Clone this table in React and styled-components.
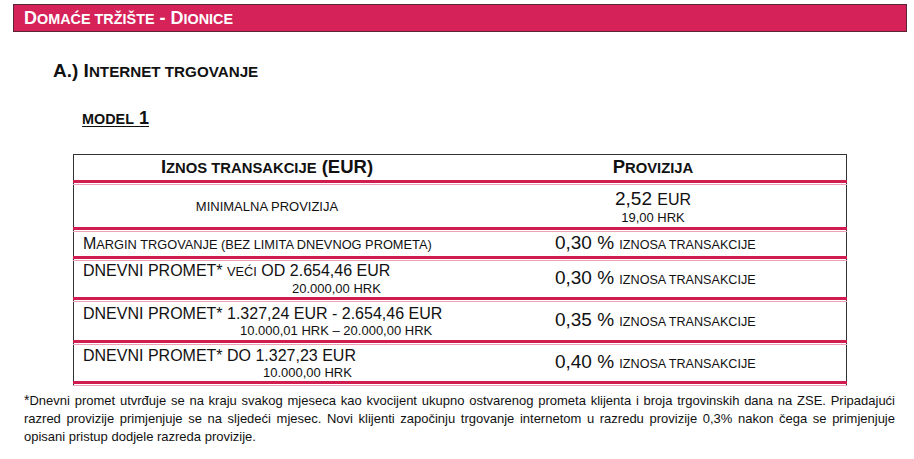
import styled, { createGlobalStyle } from "styled-components";

const GlobalStyle = createGlobalStyle`
  body {
    margin: 0;
    background: #fff;
    font-family: "Liberation Sans", Arial, sans-serif;
    color: #111;
  }
`;

const Page = styled.div`
  width: 914px;
  height: 459px;
  padding-top: 4px;
  box-sizing: border-box;
`;

// hand-made small caps: the reference uses a larger ratio than the browser's 0.7
const SC = styled.span`
  font-size: 0.8em;
  text-transform: uppercase;
`;

const Banner = styled.div`
  margin-left: 13px;
  width: 894px;
  height: 28px;
  box-sizing: border-box;
  background: #d5235a;
  border: 1px solid #5a2436;
  display: flex;
  align-items: center;
  padding-left: 10px;
  color: #fff;
  font-weight: 700;
  font-size: 18px;
`;

const Section = styled.h2`
  margin: 29px 0 0 53px;
  font-size: 19px;
  font-weight: 700;
  line-height: 20px;
`;

const ModelTitle = styled.h3`
  margin: 26px 0 0 82px;
  font-size: 18px;
  font-weight: 700;
  text-decoration: underline;
  text-underline-offset: 2px;
  line-height: 20px;
`;

const Table = styled.div`
  margin: 25px 0 0 73px;
  width: 774px;
  border: 1px solid #333;
  border-bottom: none;
  box-sizing: border-box;
`;

const Row = styled.div`
  display: flex;
  height: ${(p) => p.h}px;
`;

const Cell = styled.div`
  flex: 1;
  display: flex;
  flex-direction: column;
  justify-content: center;
  align-items: ${(p) => (p.left ? "flex-start" : "center")};
  padding-left: ${(p) => (p.left ? "9px" : "0")};
`;

const Separator = styled.div`
  height: 5px;
  box-sizing: border-box;
  border-top: 3px solid #d01c4e;
  border-bottom: 1px solid #eda0b6;
  margin: 0 -1px;
`;

const HeadText = styled.span`
  font-size: 18.5px;
  font-weight: 700;
  line-height: 20px;
`;

const Small = styled.span`
  font-size: 13px;
  line-height: 15px;
`;

const Label = styled.span`
  font-size: 16px;
  line-height: 18px;
  white-space: nowrap;
`;

const Sub = styled.span`
  font-size: 13px;
  line-height: 15px;
  margin-left: ${(p) => p.indent}px;
`;

const Value = styled.span`
  font-size: 19px;
  line-height: 21px;
`;

const Unit = styled.span`
  font-size: ${(p) => (p.big ? 16 : 12.6)}px;
`;

const Note = styled.p`
  margin: 5px 19px 0 24px;
  font-size: 13px;
  line-height: 18px;
  text-align: justify;
`;

const Star = styled.span`
  font-size: 14px;
`;

const rates = [
  {
    h: 36,
    label: (
      <Label>
        DNEVNI PROMET* <SC>veći</SC> OD 2.654,46 EUR
      </Label>
    ),
    sub: "20.000,00 HRK",
    indent: 209,
    rate: "0,30 %",
  },
  {
    h: 38,
    label: <Label>DNEVNI PROMET* 1.327,24 EUR - 2.654,46 EUR</Label>,
    sub: "10.000,01 HRK – 20.000,00 HRK",
    indent: 157,
    rate: "0,35 %",
  },
  {
    h: 36,
    label: <Label>DNEVNI PROMET* DO 1.327,23 EUR</Label>,
    sub: "10.000,00 HRK",
    indent: 180,
    rate: "0,40 %",
  },
];

const Rate = ({ value }) => (
  <Value>
    {value} <Unit>IZNOSA TRANSAKCIJE</Unit>
  </Value>
);

export default function App() {
  return (
    <Page>
      <GlobalStyle />
      <Banner>
        <span>
          D<SC>omaće tržište</SC> - D<SC>ionice</SC>
        </span>
      </Banner>
      <Section>
        A.) I<SC>nternet trgovanje</SC>
      </Section>
      <ModelTitle>
        <SC>model</SC> 1
      </ModelTitle>
      <Table>
        <Row h={25}>
          <Cell>
            <HeadText>
              I<SC>znos transakcije</SC> (EUR)
            </HeadText>
          </Cell>
          <Cell>
            <HeadText>
              P<SC>rovizija</SC>
            </HeadText>
          </Cell>
        </Row>
        <Separator />
        <Row h={42}>
          <Cell>
            <Small>MINIMALNA PROVIZIJA</Small>
          </Cell>
          <Cell>
            <Value>
              2,52 <Unit big>EUR</Unit>
            </Value>
            <Small>19,00 HRK</Small>
          </Cell>
        </Row>
        <Separator />
        <Row h={24}>
          <Cell left>
            <Label>
              M<SC>argin trgovanje (bez limita dnevnog prometa)</SC>
            </Label>
          </Cell>
          <Cell>
            <Rate value="0,30 %" />
          </Cell>
        </Row>
        <Separator />
        {rates.map((r) => (
          <div key={r.rate}>
            <Row h={r.h}>
              <Cell left>
                {r.label}
                <Sub indent={r.indent}>{r.sub}</Sub>
              </Cell>
              <Cell>
                <Rate value={r.rate} />
              </Cell>
            </Row>
            <Separator />
          </div>
        ))}
      </Table>
      <Note>
        <Star>*</Star>Dnevni promet utvrđuje se na kraju svakog mjeseca kao kvocijent ukupno
        ostvarenog prometa klijenta i broja trgovinskih dana na ZSE. Pripadajući razred
        provizije primjenjuje se na sljedeći mjesec. Novi klijenti započinju trgovanje
        internetom u razredu provizije 0,3% nakon čega se primjenjuje opisani pristup dodjele
        razreda provizije.
      </Note>
    </Page>
  );
}
